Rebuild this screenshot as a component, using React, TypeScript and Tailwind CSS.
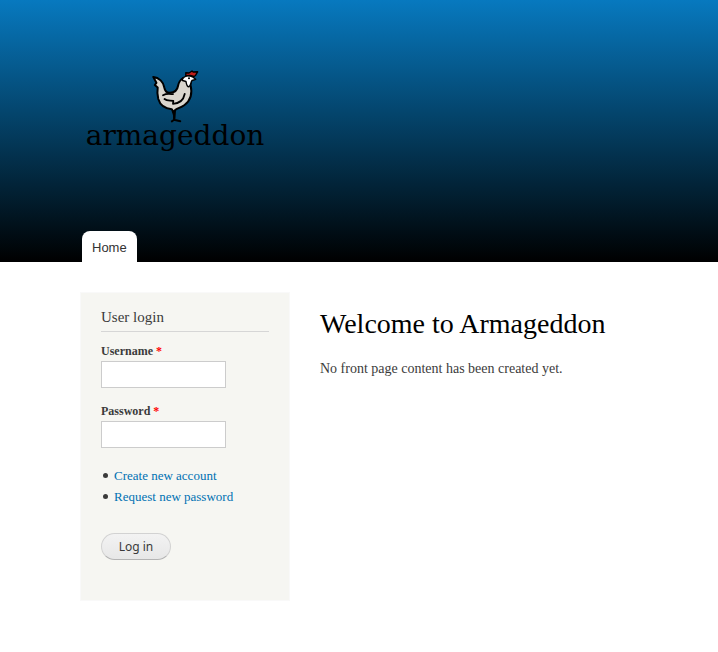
function Rooster() {
  return (
    <svg viewBox="0 0 70 70" className="h-[70px] w-[70px]" aria-hidden="true">
      <g stroke="#000" strokeLinecap="round" strokeLinejoin="round">
        <path
          d="M13.3 17C19 17.5 23.5 22 24.3 27.5C25 31.5 27 33 30 32.7C34.5 32.5 37.3 30.5 38 26C38.7 22 40 20 43 18L51.5 17L50.5 25C52.5 33 50.5 40.5 44.5 45C41 47.5 38 48.2 35.8 49.5L33.3 52L31.8 49.2C25 48.5 20 45 18.3 39C17.2 34.5 17.3 30 17.7 27.5L14.8 25L16.4 22.8Z"
          fill="#dad6ce"
          strokeWidth="2"
        />
        <path d="M42.5 18.8C44.5 15.6 49 14.8 52.4 16.8L55.7 19.3L52 20.5C50.5 22 51 26 48.8 26.8C46.8 26.8 46.5 24.5 46 21.5L42.5 20.5Z" fill="#fff" strokeWidth="1.4" />
        <path d="M45.8 15.8V12.8L49 13L52 11L53.2 12L57.6 11.8L55.5 15.5L54 16.5L50 15.4Z" fill="#bd1f1c" strokeWidth="1.4" />
        <path d="M23 35.2C26.5 33.2 29 33.8 33 34.2M24.5 39C27 41.2 30 40.2 33.3 40.8L33 43.8C39 43.5 43.5 40 44.7 34" fill="none" strokeWidth="1.8" />
        <path d="M32.8 51.5L34 55.2V59.8M35 51L34.4 59.6M33.8 60L31.8 61.4M34 59.8L40.3 61.2" fill="none" strokeWidth="1.9" />
      </g>
      <circle cx="49" cy="18.3" r="1" />
    </svg>
  );
}

function Field({ id, label, type }: { id: string; label: string; type: string }) {
  return (
    <div className="flex flex-col items-start">
      <label htmlFor={id} className="text-xs leading-5 font-bold">
        {label} <span className="text-[#ff0000]">*</span>
      </label>
      <input
        id={id}
        type={type}
        required
        className="h-[27px] w-[125px] border border-[#cccccc] bg-white px-1 text-sm outline-none"
      />
    </div>
  );
}

function BulletLink({ href, children }: { href: string; children: string }) {
  return (
    <li className="flex items-center gap-1.5 pl-0.5">
      <span className="size-[5px] rounded-full bg-[#3b3b3b]" aria-hidden="true" />
      <a href={href} className="text-[#0071b3]">
        {children}
      </a>
    </li>
  );
}

export default function App() {
  return (
    <div className="min-h-screen bg-white font-['Liberation_Serif',serif] text-[#3b3b3b]">
      <header className="bg-linear-to-b/srgb from-[#0779bf] to-black px-20">
        <a href="#home" className="flex w-[190px] flex-col items-center pt-[60px] text-black" aria-label="armageddon">
          <Rooster />
          <span className="-mt-3 font-['DejaVu_Serif',serif] text-[28px] leading-9">armageddon</span>
        </a>
        <nav className="mt-[77px] flex px-0.5">
          <a
            href="#home"
            className="h-[31px] rounded-t-lg bg-white px-[10px] font-['Liberation_Sans',sans-serif] text-[13px] leading-[33px] text-[#333333]"
          >
            Home
          </a>
        </nav>
      </header>
      <div className="flex items-start gap-[30px] px-20 pt-[30px]">
        <aside className="w-[210px] shrink-0 border border-[#f9f9f9] bg-[#f6f6f2] px-5 pt-[14px] pb-10">
          <h2 className="border-b border-[#d6d6d6] pb-1 text-[15px] leading-5">User login</h2>
          <form className="pt-[9px]" onSubmit={(event) => event.preventDefault()}>
            <div className="flex flex-col gap-[13px]">
              <Field id="username" label="Username" type="text" />
              <Field id="password" label="Password" type="password" />
            </div>
            <ul className="pt-[17px] text-[13px] leading-[21px]">
              <BulletLink href="#register">Create new account</BulletLink>
              <BulletLink href="#password">Request new password</BulletLink>
            </ul>
            <button
              type="submit"
              className="mt-[26px] block h-[27px] w-[70px] rounded-full border border-[#d2d2d2] border-b-[#b4b4b4] bg-linear-to-b from-[#f3f3f3] to-[#e7e7e7] font-['Noto_Sans',sans-serif] text-xs text-[#3a3a3a]"
            >
              Log in
            </button>
          </form>
        </aside>
        <main className="min-w-0 flex-1 pt-[14px]">
          <h1 className="text-[28px] leading-9 text-black">Welcome to Armageddon</h1>
          <p className="pt-[17px] text-sm leading-5">No front page content has been created yet.</p>
        </main>
      </div>
    </div>
  );
}
